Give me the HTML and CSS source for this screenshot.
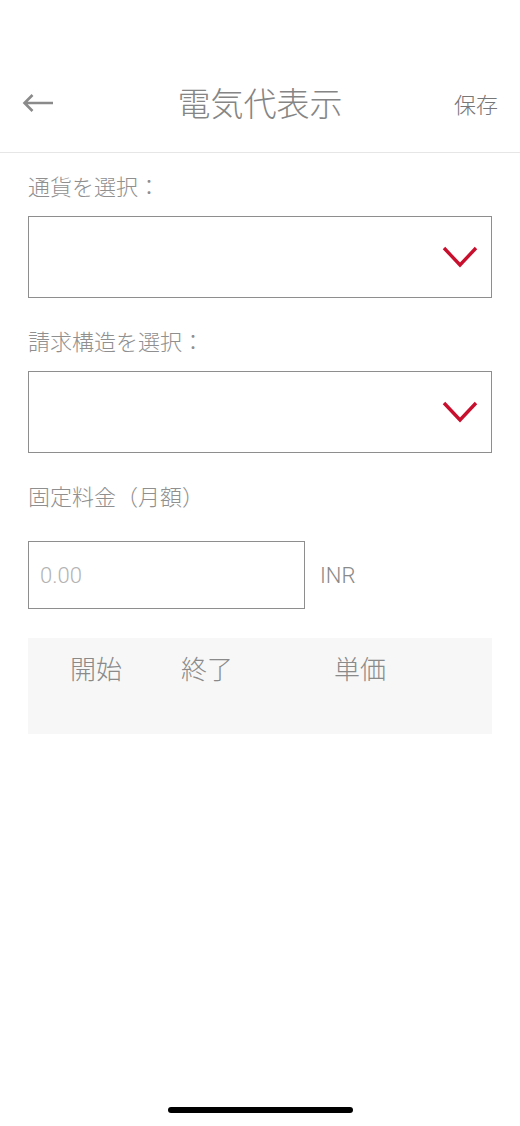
FILE: index.html
```html
<!DOCTYPE html>
<html lang="ja">
<head>
  <meta charset="UTF-8"/>
  <meta name="viewport" content="width=device-width, initial-scale=1.0"/>
  <title>電気代表示</title>
  <link rel="stylesheet" href="styles.css">
</head>
<body>
  <div class="screen">
    <header class="navbar">
      <button class="back" aria-label="戻る">
        <svg width="32" height="20" viewBox="0 0 32 20">
          <path d="M31 10H2.5M10.5 2L2.5 10l8 8" fill="none" stroke="#8a8a8a" stroke-width="2.6"/>
        </svg>
      </button>
      <h1>電気代表示</h1>
      <button class="save">保存</button>
    </header>

    <main class="content">
      <label class="label">通貨を選択：</label>
      <div class="select">
        <svg class="chev" width="36" height="22" viewBox="0 0 36 22">
          <path d="M2 2l16 17L34 2" fill="none" stroke="#c8102e" stroke-width="3.4"/>
        </svg>
      </div>

      <label class="label">請求構造を選択：</label>
      <div class="select">
        <svg class="chev" width="36" height="22" viewBox="0 0 36 22">
          <path d="M2 2l16 17L34 2" fill="none" stroke="#c8102e" stroke-width="3.4"/>
        </svg>
      </div>

      <label class="label">固定料金（月額）</label>
      <div class="amount">
        <input class="amount-input" type="text" placeholder="0.00">
        <span class="unit">INR</span>
      </div>

      <div class="rates">
        <div class="rates-head">
          <span>開始</span>
          <span>終了</span>
          <span>単価</span>
        </div>
      </div>
    </main>

    <div class="home-bar"></div>
  </div>
</body>
</html>
```

FILE: styles.css
```css
* { box-sizing: border-box; }
body {
  margin: 0;
  background: #fff;
  font-family: "Noto Sans CJK JP", "Noto Sans", sans-serif;
  font-weight: 300;
  color: #8a8a8a;
}
.screen {
  display: flex;
  flex-direction: column;
  height: 1126px;
  padding-top: 54px;
}
.navbar {
  display: flex;
  align-items: center;
  justify-content: space-between;
  height: 99px;
  padding: 0 22px;
  border-bottom: 1px solid #e6e6e6;
}
.navbar h1 {
  margin: 0 0 2px;
  font-size: 33px;
  font-weight: 300;
  color: #858585;
}
.back, .save {
  background: none;
  border: 0;
  padding: 0;
  font-family: inherit;
  font-weight: 300;
  cursor: pointer;
}
.back { display: flex; width: 46px; }
.save {
  width: 46px;
  font-size: 22px;
  color: #777;
  text-align: right;
}
.content {
  display: flex;
  flex-direction: column;
  padding: 17px 28px 0;
}
.label {
  font-size: 22px;
  line-height: 30px;
  color: #8f8f8f;
  margin-bottom: 16px;
}
.select {
  display: flex;
  align-items: center;
  justify-content: flex-end;
  height: 82px;
  padding-right: 13px;
  border: 1.5px solid #8e8e8e;
  margin-bottom: 27px;
}
.amount {
  display: flex;
  align-items: center;
  gap: 15px;
  margin-top: 15px;
  margin-bottom: 29px;
}
.amount-input {
  width: 277px;
  height: 68px;
  border: 1.5px solid #8e8e8e;
  border-radius: 0;
  padding: 0 11px;
  font-family: "Roboto", "Noto Sans", sans-serif;
  font-weight: 300;
  font-size: 22px;
  color: #555;
  outline: none;
}
.amount-input::placeholder { color: #b3b3b3; }
.unit {
  font-family: "Roboto", "Noto Sans", sans-serif;
  font-size: 22px;
  color: #8a8a8a;
}
.rates {
  height: 96px;
  background: #f7f7f7;
  padding: 13px 0 0 42px;
}
.rates-head {
  display: grid;
  grid-template-columns: 111px 153px 1fr;
  font-size: 26px;
  line-height: 34px;
  color: #8a8a8a;
}
.home-bar {
  margin: auto auto 13px;
  width: 185px;
  height: 6px;
  border-radius: 3px;
  background: #000;
}
```
